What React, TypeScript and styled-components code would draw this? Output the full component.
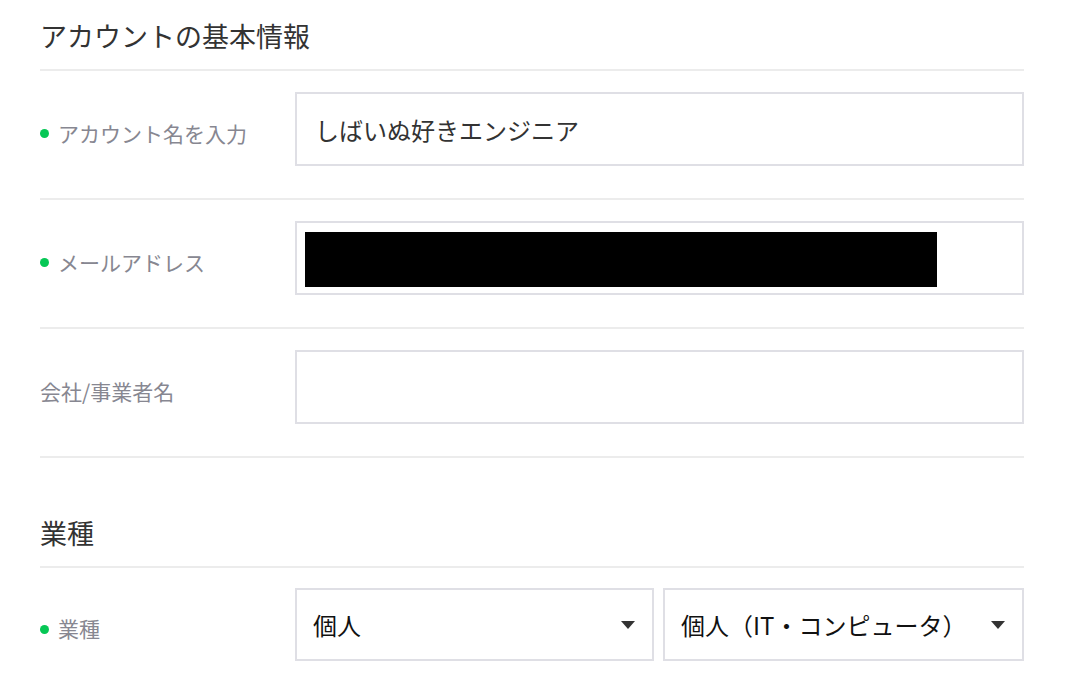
import React from 'react';
import styled, { createGlobalStyle } from 'styled-components';

const GlobalStyle = createGlobalStyle`
  body {
    margin: 0;
    background: #ffffff;
    font-family: "Noto Sans CJK JP", "Noto Sans", sans-serif;
    color: #333333;
  }
`;

const Page = styled.div`
  padding: 0 62px 0 40px;
`;

const Section = styled.section`
  & + & {
    margin-top: 39px;
  }
`;

const SectionTitle = styled.h2`
  margin: 0;
  padding: 16px 0 13px;
  font-size: 27px;
  font-weight: 400;
  line-height: 40px;
  color: #333333;
  border-bottom: 2px solid #ececec;
`;

const Row = styled.div<{ $last?: boolean }>`
  display: grid;
  grid-template-columns: 255px 1fr;
  align-items: center;
  padding: ${p => (p.$last ? '20px 0 0' : '21px 0 32px')};
  border-bottom: ${p => (p.$last ? 'none' : '2px solid #ececec')};
`;

const Label = styled.div`
  display: flex;
  align-items: center;
  margin-top: 7px;
  font-size: 21px;
  line-height: 30px;
  color: #878791;
`;

const RequiredDot = styled.span`
  width: 9px;
  height: 9px;
  border-radius: 50%;
  background: #06c755;
  margin: 2px 9px 0 0;
  flex-shrink: 0;
`;

const TextInput = styled.input`
  box-sizing: border-box;
  width: 100%;
  height: 74px;
  padding: 0 18px;
  border: 2px solid #dfdfe5;
  border-radius: 0;
  outline: none;
  font-family: inherit;
  font-size: 24px;
  color: #333333;
  background: #ffffff;
`;

const MaskedBox = styled.div`
  box-sizing: border-box;
  height: 74px;
  padding: 9px 8px;
  border: 2px solid #dfdfe5;
  display: flex;
  align-items: flex-start;
`;

const Redaction = styled.div`
  width: 632px;
  height: 55px;
  background: #000000;
`;

const SelectPair = styled.div`
  display: grid;
  grid-template-columns: 359px 1fr;
  gap: 9px;
`;

const SelectWrap = styled.div`
  position: relative;

  &::after {
    content: '';
    position: absolute;
    right: 19px;
    top: 50%;
    margin-top: -4px;
    border-left: 7px solid transparent;
    border-right: 7px solid transparent;
    border-top: 8px solid #333333;
    pointer-events: none;
  }
`;

const Select = styled.select`
  box-sizing: border-box;
  width: 100%;
  height: 73px;
  padding: 0 40px 0 16px;
  border: 2px solid #dfdfe5;
  border-radius: 0;
  appearance: none;
  outline: none;
  background: #ffffff;
  font-family: inherit;
  font-size: 24px;
  color: #111111;
`;

export default function App() {
    return (
        <>
            <GlobalStyle/>
            <Page>
                <Section>
                    <SectionTitle>アカウントの基本情報</SectionTitle>
                    <Row>
                        <Label><RequiredDot/>アカウント名を入力</Label>
                        <TextInput type="text" defaultValue="しばいぬ好きエンジニア"/>
                    </Row>
                    <Row>
                        <Label><RequiredDot/>メールアドレス</Label>
                        <MaskedBox><Redaction/></MaskedBox>
                    </Row>
                    <Row>
                        <Label>会社/事業者名</Label>
                        <TextInput type="text" defaultValue=""/>
                    </Row>
                </Section>
                <Section>
                    <SectionTitle>業種</SectionTitle>
                    <Row $last>
                        <Label><RequiredDot/>業種</Label>
                        <SelectPair>
                            <SelectWrap>
                                <Select defaultValue="individual">
                                    <option value="individual">個人</option>
                                </Select>
                            </SelectWrap>
                            <SelectWrap>
                                <Select defaultValue="it">
                                    <option value="it">個人（IT・コンピュータ）</option>
                                </Select>
                            </SelectWrap>
                        </SelectPair>
                    </Row>
                </Section>
            </Page>
        </>
    );
}
